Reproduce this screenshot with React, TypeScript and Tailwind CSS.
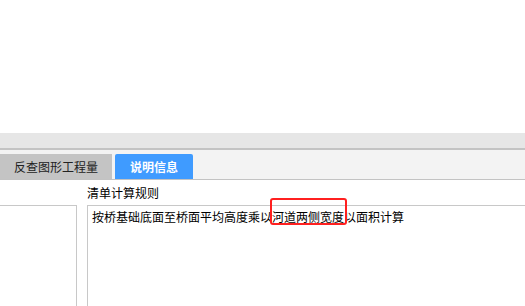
import React from "react";

export default function App() {
  const font = { fontFamily: '"Noto Sans CJK SC", "Liberation Sans", sans-serif' };
  return (
    <div className="relative w-[525px] h-[306px] overflow-hidden bg-white text-black" style={font}>
      <div className="h-[133px] bg-white" />
      <div className="h-[15px] bg-[#e6e6e6]" />
      <div className="h-[2px] bg-[#c3c3c3]" />
      <div className="h-[29px] bg-[#f3f3f3] flex items-end gap-[3px] border-b border-[#c3c3c3] box-content">
        <div className="h-[25px] w-[112px] shrink-0 bg-[#c4c4c4] flex items-center justify-center text-[12px] text-[#222]">
          反查图形工程量
        </div>
        <div className="h-[25px] w-[78px] shrink-0 bg-[#3f9bff] rounded-t-[2px] flex items-center justify-center text-[12px] font-bold text-white">
          说明信息
        </div>
      </div>
      <div className="flex">
        <div className="w-[77px] shrink-0 pt-[25px]">
          <div className="h-[120px] border-t border-r border-[#c8c8c8]" />
        </div>
        <div className="ml-[10px] w-[460px] shrink-0 flex flex-col">
          <div className="h-[25px] text-[12px] leading-[25px]">清单计算规则</div>
          <div className="h-[120px] border-t border-l border-[#c8c8c8] pl-[4px] pt-[2px] text-[12px] leading-[18px] whitespace-nowrap">
            按桥基础底面至桥面平均高度乘以河道两侧宽度以面积计算
          </div>
        </div>
      </div>
      <div className="absolute left-[270px] top-[198px] w-[77px] h-[27px] border-2 border-[#ff2020] rounded-[3px]" />
    </div>
  );
}
